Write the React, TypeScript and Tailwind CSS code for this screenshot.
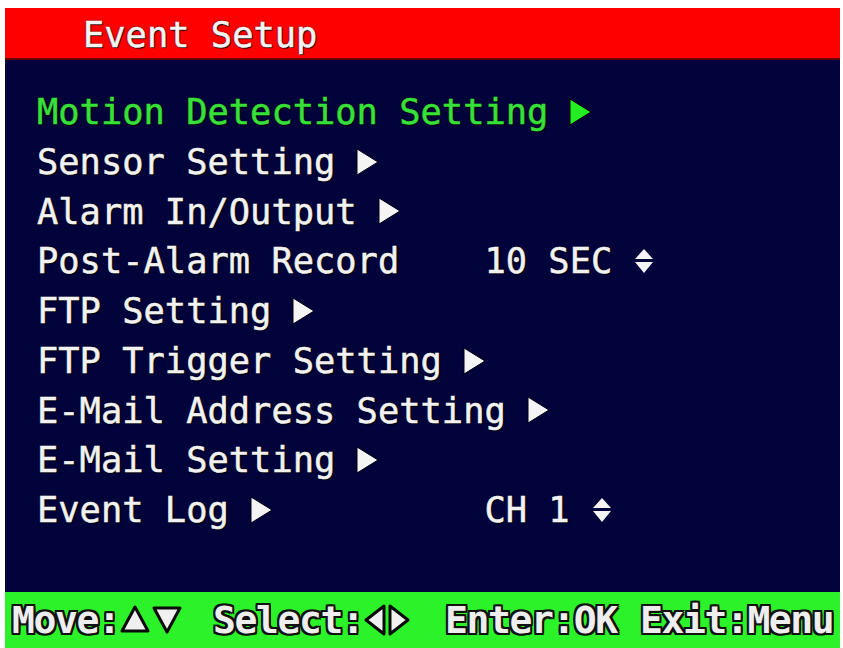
import React from "react";

const mono = "font-['DejaVu_Sans_Mono','Liberation_Mono',monospace]";

function RightTri({ color = "#f4f4f4" }: { color?: string }) {
  return (
    <span className="inline-flex w-[1ch] justify-center items-center shrink-0">
      <svg width="24" height="28" viewBox="0 0 24 28" className="shrink-0 w-[24px] h-[28px]">
        <polygon points="2,1 23,14 2,27" fill={color} stroke="#000010" strokeWidth="1" />
      </svg>
    </span>
  );
}

function UpDown() {
  return (
    <span className="inline-flex w-[1ch] justify-center items-center shrink-0">
      <svg width="20" height="26" viewBox="0 0 20 26" className="shrink-0 w-[20px] h-[26px]">
        <polygon points="10,1 19,11 1,11" fill="#f4f4f4" />
        <polygon points="1,14 19,14 10,25" fill="#f4f4f4" />
      </svg>
    </span>
  );
}

function Row({ children, green = false }: { children: React.ReactNode; green?: boolean }) {
  return (
    <div
      className={`h-[49.75px] flex items-center whitespace-pre ${green ? "text-[#38e03a]" : "text-[#f2f2f2]"}`}
    >
      {children}
    </div>
  );
}

function FootTri({ dir }: { dir: "up" | "down" | "left" | "right" }) {
  const pts =
    dir === "up"
      ? "16,3 29,27 3,27"
      : dir === "down"
      ? "3,4 29,4 16,28"
      : dir === "left"
      ? "21,2 21,30 3,16"
      : "3,2 3,30 21,16";
  const w = dir === "left" || dir === "right" ? 24 : 32;
  return (
    <svg width={w} height="32" viewBox={`0 0 ${w} 32`} className="shrink-0">
      <polygon points={pts} fill="#f0f0f0" stroke="#0a0a0a" strokeWidth="3" strokeLinejoin="round" />
    </svg>
  );
}

export default function App() {
  const shadow = "[text-shadow:0_0_2px_#000,1px_1px_1px_#000] [-webkit-text-stroke:0.5px_currentColor]";
  const footShadow =
    "[text-shadow:2px_0_0_#111,-2px_0_0_#111,0_2px_0_#111,0_-2px_0_#111,2px_2px_0_#111,-2px_-2px_0_#111,2px_-2px_0_#111,-2px_2px_0_#111]";
  return (
    <div className="w-[843px] h-[648px] bg-white pl-[5px] pt-[8px] pr-[3px] overflow-hidden">
      <div className="w-[835px] h-[640px] flex flex-col">
        <div className="h-[52px] bg-[#ff0000] flex items-center pl-[78px] pt-[4px] border-b-2 border-[#6a0000]">
          <span className={`${mono} text-[35.4px] leading-none text-[#f4f4f4] ${shadow}`}>Event Setup</span>
        </div>
        <div className={`flex-1 bg-[#03033b] pl-[32px] pt-[27px] ${mono} text-[35.4px] leading-none ${shadow}`}>
          <Row green>
            Motion Detection Setting <RightTri color="#22ee22" />
          </Row>
          <Row>
            Sensor Setting <RightTri />
          </Row>
          <Row>
            Alarm In/Output <RightTri />
          </Row>
          <Row>
            {"Post-Alarm Record    10 SEC "}
            <UpDown />
          </Row>
          <Row>
            FTP Setting <RightTri />
          </Row>
          <Row>
            FTP Trigger Setting <RightTri />
          </Row>
          <Row>
            E-Mail Address Setting <RightTri />
          </Row>
          <Row>
            E-Mail Setting <RightTri />
          </Row>
          <Row>
            Event Log <RightTri />
            {"          CH 1 "}
            <UpDown />
          </Row>
        </div>
        <div
          className={`h-[56px] bg-[#2cf22a] flex items-center pl-[7px] font-['DejaVu_Sans_Mono',monospace] font-bold text-[38px] leading-none tracking-[-1.4px] text-[#eeeeee] ${footShadow}`}
        >
          <span className="flex items-center w-[201px] shrink-0">
            Move:
            <FootTri dir="up" />
            <FootTri dir="down" />
          </span>
          <span className="flex items-center w-[232px] shrink-0">
            Select:
            <FootTri dir="left" />
            <FootTri dir="right" />
          </span>
          <span className="w-[195px] shrink-0">Enter:OK</span>
          <span className="shrink-0">Exit:Menu</span>
        </div>
      </div>
    </div>
  );
}
